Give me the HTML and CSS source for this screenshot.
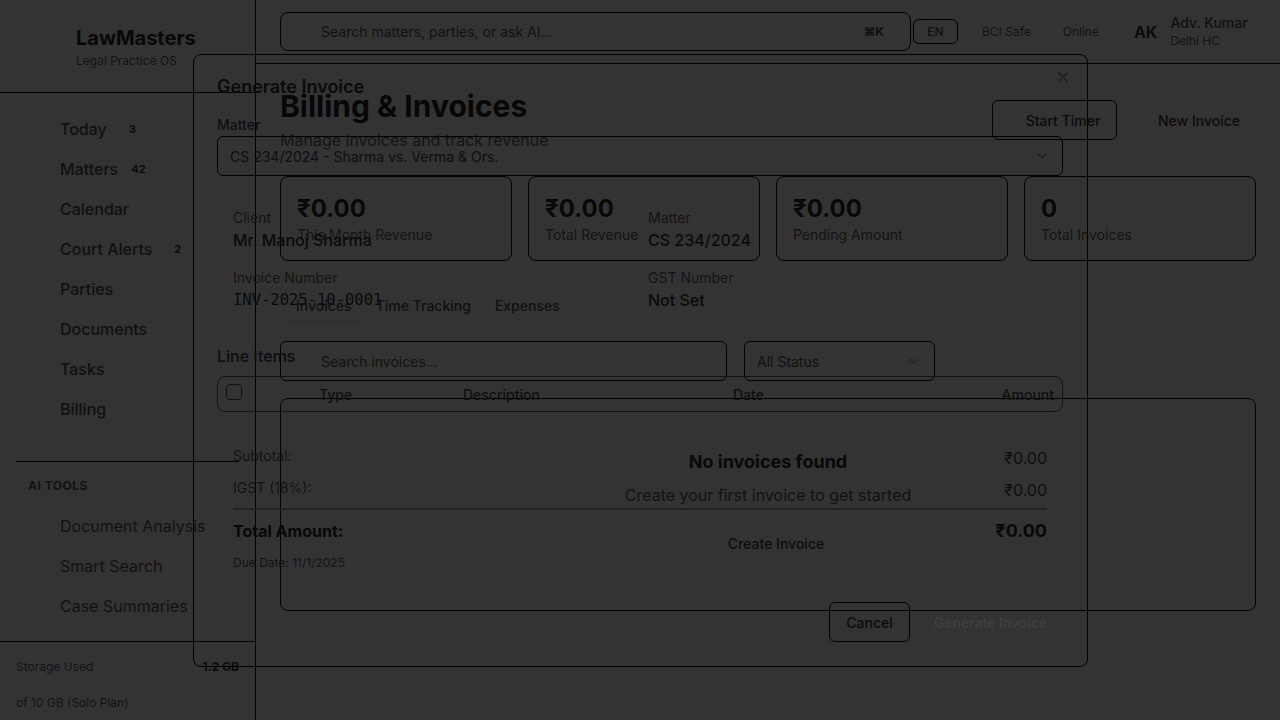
FILE: index.html
```html
<!DOCTYPE html>
<html lang="en">
<head>
<meta charset="utf-8">
<title>LawMasters - Billing & Invoices</title>
<link rel="stylesheet" href="styles.css">
</head>
<body>
<div class="app">
  <aside class="sidebar">
    <div class="brand">
      <div class="brand-name">LawMasters</div>
      <div class="brand-sub">Legal Practice OS</div>
    </div>
    <nav class="nav">
      <a class="nav-item"><span class="nav-label">Today</span><span class="badge">3</span></a>
      <a class="nav-item"><span class="nav-label">Matters</span><span class="badge badge-wide">42</span></a>
      <a class="nav-item"><span class="nav-label">Calendar</span></a>
      <a class="nav-item"><span class="nav-label">Court Alerts</span><span class="badge">2</span></a>
      <a class="nav-item"><span class="nav-label">Parties</span></a>
      <a class="nav-item"><span class="nav-label">Documents</span></a>
      <a class="nav-item"><span class="nav-label">Tasks</span></a>
      <a class="nav-item"><span class="nav-label">Billing</span></a>
    </nav>
    <div class="divider"></div>
    <div class="section-title">AI TOOLS</div>
    <nav class="nav nav-ai">
      <a class="nav-item"><span class="nav-label">Document Analysis</span></a>
      <a class="nav-item"><span class="nav-label">Smart Search</span></a>
      <a class="nav-item"><span class="nav-label">Case Summaries</span></a>
    </nav>
    <div class="storage">
      <div class="storage-row"><span>Storage Used</span><span class="storage-val">1.2 GB</span></div>
      <div class="storage-bar"></div>
      <div class="storage-row">of 10 GB (Solo Plan)</div>
    </div>
  </aside>

  <main class="main">
    <header class="topbar">
      <div class="global-search">
        <span class="gs-placeholder">Search matters, parties, or ask AI...</span>
        <span class="kbd">⌘K</span>
      </div>
      <button class="lang-btn">EN</button>
      <span class="status status-bci">BCI Safe</span>
      <span class="status status-online">Online</span>
      <span class="avatar">AK</span>
      <div class="user">
        <div class="user-name">Adv. Kumar</div>
        <div class="user-court">Delhi HC</div>
      </div>
    </header>

    <section class="content">
      <div class="page-head">
        <div>
          <h1 class="page-title">Billing &amp; Invoices</h1>
          <p class="page-sub">Manage invoices and track revenue</p>
        </div>
        <div class="page-actions">
          <button class="btn btn-outline btn-timer">Start Timer</button>
          <button class="btn btn-primary">New Invoice</button>
        </div>
      </div>

      <div class="stats">
        <div class="stat-card"><div class="stat-value">₹0.00</div><div class="stat-label">This Month Revenue</div></div>
        <div class="stat-card"><div class="stat-value">₹0.00</div><div class="stat-label">Total Revenue</div></div>
        <div class="stat-card"><div class="stat-value">₹0.00</div><div class="stat-label">Pending Amount</div></div>
        <div class="stat-card"><div class="stat-value">0</div><div class="stat-label">Total Invoices</div></div>
      </div>

      <div class="tabs">
        <span class="tab tab-active">Invoices</span>
        <span class="tab">Time Tracking</span>
        <span class="tab">Expenses</span>
      </div>

      <div class="toolbar">
        <div class="search-input">Search invoices...</div>
        <div class="status-select"><span>All Status</span>
          <svg class="chev" width="16" height="16" viewBox="0 0 24 24" fill="none" stroke="currentColor" stroke-width="2" stroke-linecap="round" stroke-linejoin="round"><path d="m6 9 6 6 6-6"/></svg>
        </div>
      </div>

      <div class="table-card">
        <div class="empty-title">No invoices found</div>
        <div class="empty-sub">Create your first invoice to get started</div>
        <button class="btn btn-create">Create Invoice</button>
      </div>
    </section>
  </main>
</div>

<div class="modal">
  <h2 class="modal-title">Generate Invoice</h2>
  <svg class="modal-close" width="16" height="16" viewBox="0 0 24 24" fill="none" stroke="currentColor" stroke-width="2" stroke-linecap="round"><path d="M18 6 6 18M6 6l12 12"/></svg>

  <label class="field-label">Matter</label>
  <div class="select">
    <span>CS 234/2024 - Sharma vs. Verma &amp; Ors.</span>
    <svg class="chev" width="16" height="16" viewBox="0 0 24 24" fill="none" stroke="currentColor" stroke-width="2" stroke-linecap="round" stroke-linejoin="round"><path d="m6 9 6 6 6-6"/></svg>
  </div>

  <div class="info-grid">
    <div class="info"><div class="info-label">Client</div><div class="info-value">Mr. Manoj Sharma</div></div>
    <div class="info"><div class="info-label">Matter</div><div class="info-value">CS 234/2024</div></div>
    <div class="info"><div class="info-label">Invoice Number</div><div class="info-value mono">INV-2025-10-0001</div></div>
    <div class="info"><div class="info-label">GST Number</div><div class="info-value">Not Set</div></div>
  </div>

  <div class="section-label">Line Items</div>
  <div class="line-table">
    <span class="cb"></span>
    <span class="col col-type">Type</span>
    <span class="col col-desc">Description</span>
    <span class="col col-date">Date</span>
    <span class="col col-amount">Amount</span>
  </div>

  <div class="totals">
    <div class="tot-row"><span>Subtotal:</span><span class="tot-num">₹0.00</span></div>
    <div class="tot-row tot-last"><span>IGST (18%):</span><span class="tot-num">₹0.00</span></div>
    <div class="tot-grand"><span>Total Amount:</span><span class="tot-grand-num">₹0.00</span></div>
    <div class="due">Due Date: 11/1/2025</div>
  </div>

  <div class="modal-footer">
    <button class="btn btn-outline btn-cancel">Cancel</button>
    <button class="btn btn-disabled">Generate Invoice</button>
  </div>
</div>
</body>
</html>
```

FILE: styles.css
```css
* { box-sizing: border-box; }

html, body {
  margin: 0;
  padding: 0;
  width: 1280px;
  height: 720px;
  overflow: hidden;
}

body {
  background: #333333;
  color: #0b0b0b;
  font-family: Inter, "Noto Sans", "Liberation Sans", sans-serif;
  font-size: 14px;
  position: relative;
}

button {
  font-family: inherit;
  color: inherit;
  background: transparent;
  border: 0;
  padding: 0;
  cursor: pointer;
}

h1, h2, p { margin: 0; }

.app {
  display: flex;
  height: 720px;
}

/* Sidebar */
.sidebar {
  width: 256px;
  flex-shrink: 0;
  border-right: 1px solid #000;
  display: flex;
  flex-direction: column;
}

.brand {
  height: 93px;
  border-bottom: 1px solid #000;
  padding: 25px 0 0 76px;
}

.brand-name {
  font-size: 20px;
  font-weight: 700;
  line-height: 26px;
  color: #080808;
}

.brand-sub {
  font-size: 12px;
  line-height: 16px;
  color: #131313;
  margin-top: 2px;
}

.nav {
  display: flex;
  flex-direction: column;
  padding-top: 16px;
}

.nav-item {
  height: 40px;
  display: flex;
  align-items: center;
  padding-left: 60px;
  font-size: 16px;
  font-weight: 500;
  color: #101010;
}

.badge {
  font-size: 11px;
  font-weight: 700;
  margin-left: 22px;
  color: #0b0b0b;
}

.badge-wide {
  margin-left: 13px;
}

.divider {
  height: 1px;
  background: #000;
  margin: 32px 16px 0;
}

.section-title {
  font-size: 12px;
  font-weight: 700;
  letter-spacing: 0.5px;
  padding-left: 28px;
  margin-top: 16px;
  line-height: 16px;
  color: #121212;
}

.nav-ai {
  padding-top: 12px;
}

.nav-ai .nav-item {
  font-weight: 400;
  color: #121212;
}

.storage {
  margin-top: auto;
  border-top: 1px solid #000;
  padding: 17px 16px 9px;
  font-size: 12px;
  color: #131313;
}

.storage-row {
  display: flex;
  justify-content: space-between;
  line-height: 16px;
}

.storage-val {
  font-weight: 700;
  color: #0b0b0b;
}

.storage-bar {
  height: 8px;
  margin: 6px 0 6px;
}

/* Main */
.main {
  flex: 1;
  display: flex;
  flex-direction: column;
  min-width: 0;
}

.topbar {
  height: 64px;
  border-bottom: 1px solid #000;
  display: flex;
  align-items: center;
  padding: 0 24px;
  flex-shrink: 0;
}

.global-search {
  width: 631px;
  height: 39px;
  border: 1px solid #000;
  border-radius: 8px;
  display: flex;
  align-items: center;
  padding: 0 26px 0 40px;
  justify-content: space-between;
}

.gs-placeholder {
  font-size: 14px;
  color: #121212;
}

.kbd {
  font-size: 12px;
  font-weight: 700;
  color: #0e0e0e;
}

.lang-btn {
  width: 45px;
  height: 25px;
  margin-left: 2px;
  border: 1px solid #000;
  border-radius: 6px;
  font-size: 12px;
  font-weight: 500;
  color: #111;
}

.status {
  font-size: 12px;
  color: #131313;
}

.status-bci { margin-left: 24px; }
.status-online { margin-left: 32px; }

.avatar {
  font-size: 16px;
  font-weight: 700;
  margin-left: 35px;
  color: #0b0b0b;
}

.user {
  margin-left: 13px;
}

.user-name {
  font-size: 14px;
  font-weight: 500;
  line-height: 18px;
  color: #101010;
}

.user-court {
  font-size: 12px;
  line-height: 16px;
  margin-top: 1px;
  color: #141414;
}

.content {
  padding: 24px 24px 0;
}

.page-head {
  display: flex;
  justify-content: space-between;
  align-items: center;
}

.page-title {
  font-size: 30px;
  font-weight: 700;
  line-height: 36px;
  color: #070707;
}

.page-sub {
  margin-top: 4px;
  font-size: 16px;
  line-height: 24px;
  color: #131313;
}

.page-actions {
  display: flex;
  gap: 16px;
  align-items: center;
}

.btn {
  height: 40px;
  font-size: 14px;
  font-weight: 500;
  border-radius: 6px;
  display: inline-flex;
  align-items: center;
  justify-content: center;
}

.btn-outline {
  border: 1px solid #000;
}

.btn-timer {
  width: 125px;
  padding-left: 17px;
}

.btn-primary {
  width: 123px;
  padding-left: 9px;
  color: #0b0b0b;
}

.stats {
  margin-top: 24px;
  display: grid;
  grid-template-columns: repeat(4, 1fr);
  gap: 16px;
}

.stat-card {
  border: 1px solid #000;
  border-radius: 8px;
  padding: 16px 16px 15px;
  height: 85px;
}

.stat-value {
  font-size: 24px;
  font-weight: 700;
  line-height: 32px;
  color: #080808;
}

.stat-label {
  font-size: 14px;
  line-height: 20px;
  color: #131313;
}

.tabs {
  margin-top: 24px;
  height: 40px;
  display: flex;
  align-items: center;
  padding: 2px 4px 0;
}

.tab {
  padding: 6px 12px;
  font-size: 14px;
  font-weight: 500;
  color: #101010;
  line-height: 20px;
}

.tab-active {
  padding-left: 12px;
  box-shadow: 0 -1px 0 #2c2c2c inset;
}

.toolbar {
  margin-top: 16px;
  display: flex;
  gap: 17px;
}

.search-input {
  width: 447px;
  height: 40px;
  border: 1px solid #000;
  border-radius: 6px;
  padding-left: 40px;
  display: flex;
  align-items: center;
  font-size: 14px;
  color: #121212;
}

.status-select {
  width: 191px;
  height: 40px;
  border: 1px solid #000;
  border-radius: 6px;
  padding: 0 12px;
  display: flex;
  align-items: center;
  justify-content: space-between;
  font-size: 14px;
  color: #111;
}

.chev {
  color: #222;
}

.table-card {
  margin-top: 17px;
  border: 1px solid #000;
  border-radius: 8px;
  height: 213px;
  padding-top: 49px;
  display: flex;
  flex-direction: column;
  align-items: center;
}

.empty-title {
  font-size: 18px;
  font-weight: 700;
  line-height: 28px;
  color: #090909;
}

.empty-sub {
  margin-top: 7px;
  font-size: 16px;
  line-height: 24px;
  color: #121212;
}

.btn-create {
  margin-top: 18px;
  height: 36px;
  padding: 0 16px 0 32px;
  color: #0d0d0d;
}

/* Modal (overlays page content) */
.modal {
  position: absolute;
  left: 193px;
  top: 54px;
  width: 895px;
  height: 613px;
  border: 1px solid #000;
  border-radius: 8px;
  padding: 23px 24px 24px 23px;
  display: flex;
  flex-direction: column;
}

.modal-title {
  font-size: 18px;
  font-weight: 600;
  line-height: 18px;
  color: #0a0a0a;
}

.modal-close {
  position: absolute;
  top: 14px;
  right: 16px;
  color: #1b1b1b;
}

.field-label {
  margin-top: 19px;
  font-size: 14px;
  font-weight: 500;
  line-height: 20px;
  color: #0e0e0e;
}

.select {
  margin-top: 1px;
  height: 40px;
  border: 1px solid #000;
  border-radius: 6px;
  padding: 0 12px;
  display: flex;
  align-items: center;
  justify-content: space-between;
  font-size: 14px;
  color: #0e0e0e;
}

.select .chev { color: #1e1e1e; }

.info-grid {
  margin-top: 16px;
  padding: 16px;
  display: grid;
  grid-template-columns: 1fr 1fr;
  column-gap: 16px;
  row-gap: 16px;
}

.info-label {
  font-size: 14px;
  line-height: 20px;
  color: #131313;
}

.info-value {
  font-size: 16px;
  font-weight: 500;
  line-height: 24px;
  color: #0a0a0a;
}

.mono {
  font-family: "DejaVu Sans Mono", "Liberation Mono", monospace;
  font-weight: 400;
  font-size: 15.5px;
}

.section-label {
  margin-top: 16px;
  font-size: 16px;
  font-weight: 500;
  line-height: 24px;
  color: #0d0d0d;
}

.line-table {
  margin-top: 8px;
  height: 36px;
  border: 1px solid #141414;
  border-radius: 8px;
  display: flex;
  align-items: center;
  font-size: 14px;
  font-weight: 500;
  color: #0f0f0f;
}

.cb {
  width: 16px;
  height: 16px;
  flex-shrink: 0;
  border: 1px solid #111;
  border-radius: 4px;
  margin-left: 8px;
  margin-top: -4px;
}

.col { line-height: 20px; margin-top: 1px; }
.col-type { margin-left: 77px; width: 144px; }
.col-desc { width: 270px; }
.col-amount { margin-left: auto; margin-right: 8px; }

.totals {
  margin-top: 34px;
  padding: 0 16px;
}

.tot-row {
  display: flex;
  justify-content: space-between;
  font-size: 14px;
  line-height: 20px;
  height: 20px;
  color: #131313;
  margin-bottom: 12px;
}

.tot-last {
  margin-bottom: 10px;
}

.tot-num {
  font-size: 16px;
  color: #0f0f0f;
  padding-top: 2px;
}

.tot-grand {
  display: flex;
  justify-content: space-between;
  border-top: 2px solid #222;
  padding-top: 8px;
  font-size: 16px;
  font-weight: 700;
  line-height: 26px;
  color: #080808;
}

.tot-grand-num {
  font-size: 18px;
  color: #080808;
}

.due {
  margin-top: 11px;
  font-size: 12px;
  line-height: 16px;
  color: #131313;
}

.modal-footer {
  margin-top: auto;
  display: flex;
  justify-content: flex-end;
  gap: 8px;
}

.btn-cancel {
  width: 81px;
}

.btn-disabled {
  width: 145px;
  color: #404040;
}
```
